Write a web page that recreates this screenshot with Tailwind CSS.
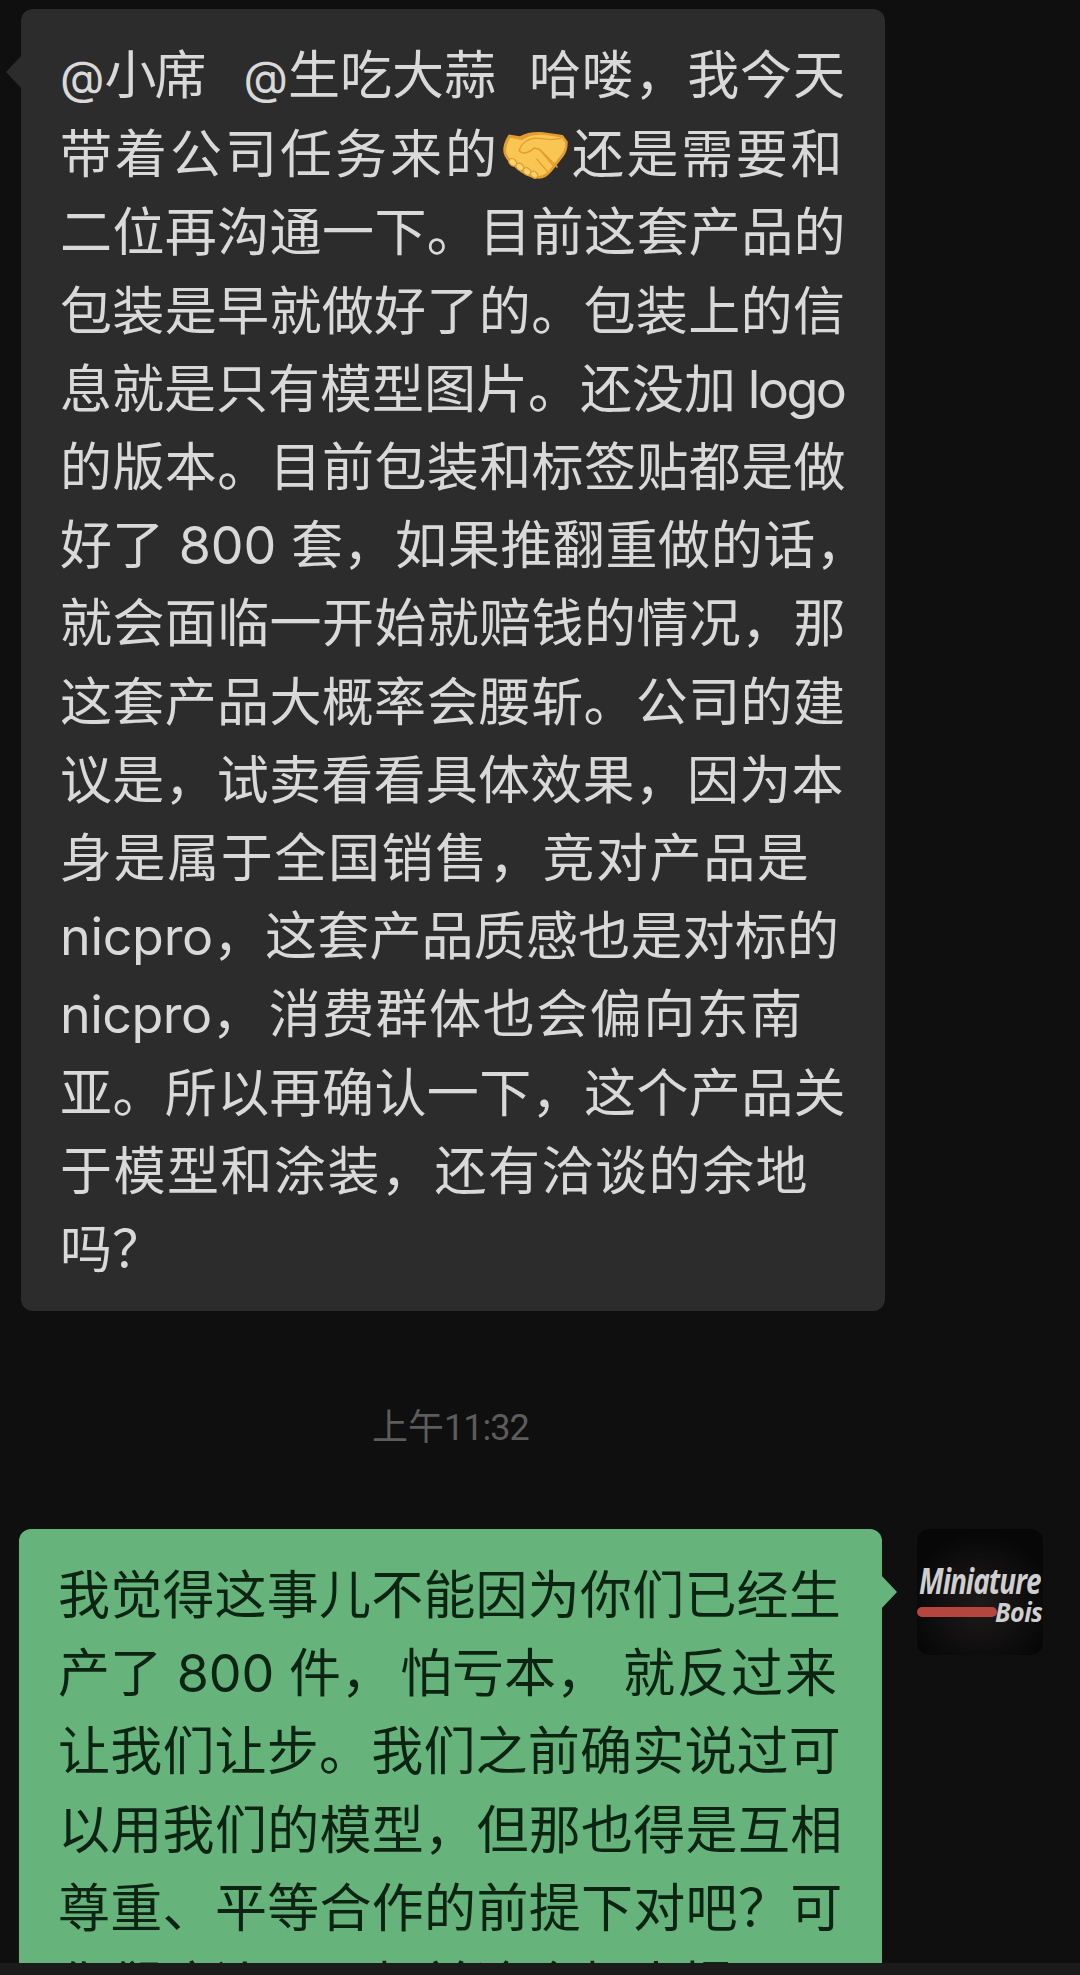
<!DOCTYPE html>
<html lang="zh-CN">
<head>
    <meta charset="UTF-8">
    <title>聊天记录</title>
    <script src="https://cdn.jsdelivr.net/npm/@tailwindcss/browser@4"></script>
</head>
<body class="bg-[#0f0f0f]">
    <div class="w-[1080px] h-[1975px] overflow-hidden flex flex-col font-['Inter','Noto_Sans_CJK_SC',sans-serif]">
        <div class="h-[1963px] overflow-hidden pt-[9px]">
            <!-- incoming message -->
            <div class="relative ml-[21px] w-[864px] h-[1302px] bg-[#2c2c2c] rounded-[12px] pl-[39px] pt-[28px] text-[52px] leading-[78.2px] text-[#d9d9d9] whitespace-nowrap">
                <div class="absolute left-[-15px] top-[46px] w-[16px] h-[34px] bg-[#2c2c2c] [clip-path:polygon(100%_0,0_50%,100%_100%)]"></div>
                <p><span class="text-[46px]">@</span><span class="tracking-[-2px]">小席</span><span class="ml-[39px] text-[46px]">@</span>生吃大蒜<span class="ml-[33px] tracking-[0.8px]">哈喽，我今天</span></p>
                <p class="flex items-center"><span class="tracking-[3px]">带着公司任务来的</span><svg class="w-[65px] h-[49px] ml-[3px] mr-[4px] mt-[1px]" viewBox="0 0 200 146">
                    <path d="M18 8 L52 14 C72 2 100 -2 130 2 L184 10 L199 30 C200 50 194 66 186 76 L150 122 C135 140 118 148 100 143 C80 140 60 130 40 112 C20 96 8 84 2 66 C-2 48 6 24 18 8Z" fill="#e39c2e"/>
                    <path d="M22 18 L60 26 C76 12 104 8 132 10 L182 18 L191 34 C192 50 186 62 178 72 L146 114 C132 132 118 138 102 135 C84 132 62 122 44 106 C26 92 16 80 10 64 C8 48 14 32 22 18Z" fill="#f9c654"/>
                    <path d="M50 58 C56 34 80 18 108 20 L148 24 L178 20" fill="none" stroke="#e39c2e" stroke-width="4" stroke-linecap="round"/>
                    <path d="M50 58 C60 72 82 64 96 50 L112 54 L166 108" fill="none" stroke="#e39c2e" stroke-width="5" stroke-linecap="round"/>
                    <path d="M104 84 L136 122 M124 68 L154 104" fill="none" stroke="#e39c2e" stroke-width="4" stroke-linecap="round"/>
                    <g fill="#fbd572" stroke="#e39c2e" stroke-width="4">
                        <ellipse cx="30" cy="94" rx="13" ry="10" transform="rotate(40 30 94)"/>
                        <ellipse cx="52" cy="108" rx="13" ry="10" transform="rotate(40 52 108)"/>
                        <ellipse cx="74" cy="122" rx="13" ry="10" transform="rotate(40 74 122)"/>
                        <ellipse cx="96" cy="132" rx="12" ry="9" transform="rotate(40 96 132)"/>
                    </g>
                </svg><span class="tracking-[2.6px]">还是需要和</span></p>
                <p class="tracking-[0.4px]">二位再沟通一下。目前这套产品的</p>
                <p class="tracking-[0.35px]">包装是早就做好了的。包装上的信</p>
                <p>息就是只有模型图片。还没加 <span class="ml-[-3px] tracking-[-2.5px]">logo</span></p>
                <p class="tracking-[0.4px]">的版本。目前包装和标签贴都是做</p>
                <p>好了 800 套，<span class="tracking-[0.6px]">如果推翻重做的话，</span></p>
                <p class="tracking-[0.4px]">就会面临一开始就赔钱的情况，那</p>
                <p class="tracking-[0.35px]">这套产品大概率会腰斩。公司的建</p>
                <p class="tracking-[0.25px]">议是，试卖看看具体效果，因为本</p>
                <p class="tracking-[1.6px]">身是属于全国销售，竞对产品是</p>
                <p><span class="tracking-[-0.3px]">nicpro</span>，<span class="tracking-[0.2px]">这套产品质感也是对标的</span></p>
                <p><span class="tracking-[-0.5px]">nicpro</span><span class="mr-[5px]">，</span><span class="tracking-[1.5px]">消费群体也会偏向东南</span></p>
                <p class="tracking-[0.4px]">亚。所以再确认一下，这个产品关</p>
                <p class="tracking-[1.5px]">于模型和涂装，还有洽谈的余地</p>
                <p>吗？</p>
            </div>

            <div class="mt-[89px] pl-[372px] h-[56px] text-[36px] leading-[56px] text-[#5c5c5c] font-['Roboto','Noto_Sans_CJK_SC',sans-serif]">上午<span class="tracking-[-1px]">11:32</span></div>

            <!-- outgoing message -->
            <div class="mt-[73px] flex items-start">
                <div class="relative ml-[19px] w-[863px] bg-[#66b47c] rounded-[12px] pl-[39px] pt-[28px] pb-[24px] text-[52px] leading-[78.2px] text-[#0d2413] whitespace-nowrap">
                    <div class="absolute right-[-15px] top-[46px] w-[16px] h-[34px] bg-[#66b47c] [clip-path:polygon(0_0,100%_50%,0_100%)]"></div>
                    <p class="tracking-[0.2px]">我觉得这事儿不能因为你们已经生</p>
                    <p>产了 800 件，<span class="ml-[7px]">怕亏本，</span><span class="ml-[15px] tracking-[2px]">就反过来</span></p>
                    <p class="tracking-[0.2px]">让我们让步。我们之前确实说过可</p>
                    <p class="tracking-[0.3px]">以用我们的模型，但那也得是互相</p>
                    <p class="tracking-[0.3px]">尊重、平等合作的前提下对吧？可</p>
                    <p>你们这边是一起前途合起来提</p>
                </div>
                <!-- avatar -->
                <div class="ml-[35px] w-[126px] h-[126px] rounded-[12px] bg-[radial-gradient(circle_at_50%_60%,#1e1a1a,#070707_75%)] overflow-hidden relative text-[#cfcfcf] font-['Open_Sans',sans-serif] font-bold italic">
                    <div class="absolute left-0 top-[78px] w-[80px] h-[10px] bg-[#b5453f] rounded-full"></div>
                    <div class="absolute left-[2px] top-[35px] text-[28px] leading-[32px] tracking-[-1px] scale-y-125">Miniature</div>
                    <div class="absolute left-[78px] top-[69px] text-[25px] leading-[26px] tracking-[-0.5px] scale-y-110">Bois</div>
                </div>
            </div>
        </div>
        <div class="h-[12px] bg-[#1b1b1b]"></div>
    </div>
</body>
</html>
